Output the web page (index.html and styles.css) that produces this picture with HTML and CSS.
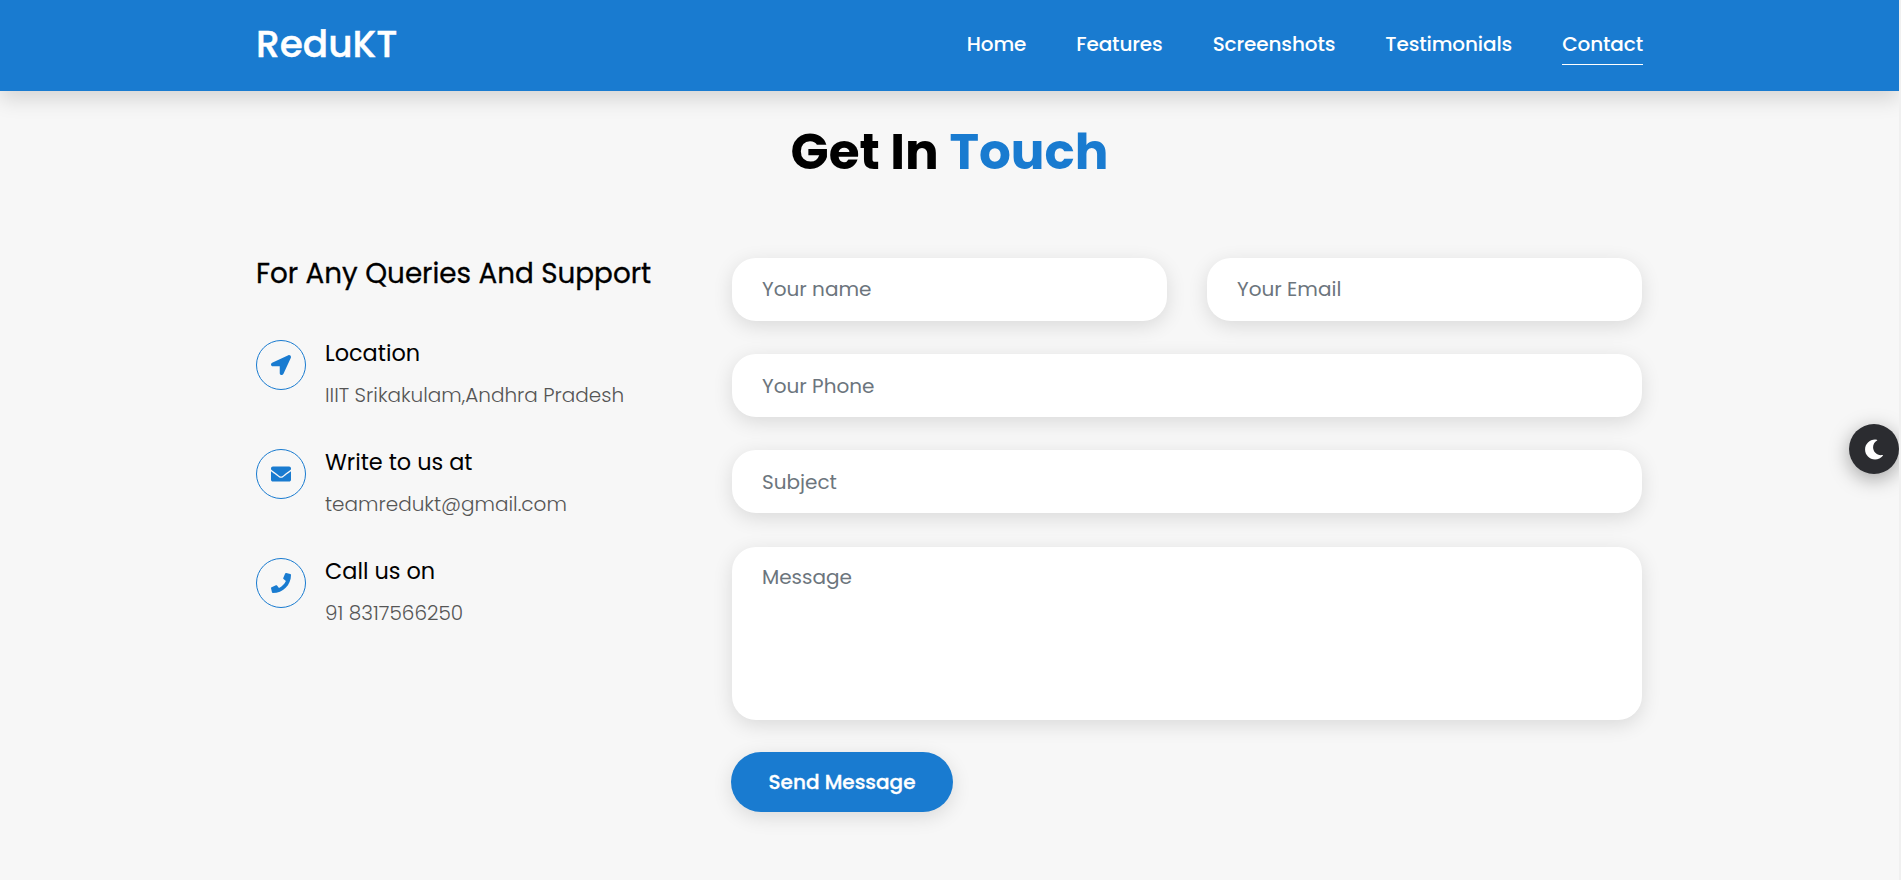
FILE: index.html
```html
<!DOCTYPE html>
<html lang="en">
<head>
<meta charset="utf-8">
<title>ReduKT</title>
<link rel="stylesheet" href="styles.css">
</head>
<body>
<header class="header">
  <div class="container header-row">
    <a class="logo">ReduKT</a>
    <nav class="nav">
      <a class="nav-link">Home</a>
      <a class="nav-link">Features</a>
      <a class="nav-link">Screenshots</a>
      <a class="nav-link">Testimonials</a>
      <a class="nav-link active">Contact</a>
    </nav>
  </div>
</header>
<main class="container">
  <h1 class="title">Get In <span class="accent">Touch</span></h1>
  <div class="columns">
    <section class="info">
      <h2 class="info-title">For Any Queries And Support</h2>
      <div class="item">
        <div class="item-icon"><svg width="20" height="20" viewBox="0 0 512 512"><path d="M444.500 3.500L28.700 195.400c-48 22.400-32 92.800 19.200 92.800h175.900v175.900c0 51.200 70.400 67.200 92.800 19.200l191.900-415.800c16-38.400-25.600-80-64-64z"/></svg></div>
        <div><h3 class="item-name">Location</h3><p class="item-text">IIIT Srikakulam,Andhra Pradesh</p></div>
      </div>
      <div class="item">
        <div class="item-icon"><svg width="20" height="20" viewBox="0 0 512 512"><path d="M502.300 190.800c3.900-3.100 9.700-.2 9.700 4.700V400c0 26.500-21.500 48-48 48H48c-26.500 0-48-21.500-48-48V195.600c0-5 5.700-7.800 9.700-4.700 22.400 17.400 52.100 39.500 154.100 113.600 21.100 15.400 56.700 47.800 92.200 47.600 35.700.3 72-32.800 92.300-47.600 102-74.100 131.600-96.300 154-113.700zM256 320c23.200.4 56.600-29.200 73.400-41.400 132.700-96.300 142.800-104.700 173.400-128.700 5.800-4.500 9.200-11.500 9.200-18.900v-19c0-26.500-21.500-48-48-48H48c-26.500 0-48 21.500-48 48v19c0 7.400 3.400 14.300 9.200 18.900 30.600 23.900 40.700 32.400 173.400 128.700 16.800 12.200 50.200 41.800 73.400 41.400z"/></svg></div>
        <div><h3 class="item-name">Write to us at</h3><p class="item-text">teamredukt@gmail.com</p></div>
      </div>
      <div class="item">
        <div class="item-icon"><svg width="20" height="20" viewBox="0 0 512 512"><path d="M493.400 24.600l-104-24c-11.300-2.600-22.900 3.300-27.500 13.900l-48 112c-4.200 9.800-1.400 21.300 6.900 28l60.600 49.600c-36 76.700-98.900 140.500-177.200 177.200l-49.600-60.600c-6.800-8.300-18.200-11.100-28-6.900l-112 48C3.900 366.500-2 378.100.6 389.400l24 104C27.100 504.200 36.700 512 48 512c256.100 0 464-207.500 464-464 0-11.200-7.700-20.900-18.600-23.400z"/></svg></div>
        <div><h3 class="item-name">Call us on</h3><p class="item-text">91 8317566250</p></div>
      </div>
    </section>
    <form class="form">
      <div class="pair">
        <input class="field" type="text" placeholder="Your name">
        <input class="field" type="text" placeholder="Your Email">
      </div>
      <input class="field" type="text" placeholder="Your Phone">
      <input class="field" type="text" placeholder="Subject">
      <textarea class="field message" placeholder="Message"></textarea>
      <button class="send" type="button">Send Message</button>
    </form>
  </div>
</main>
<div class="toggle"><svg width="20" height="21" viewBox="0 0 512 512"><path d="M283.200 512c79 0 151.100-35.900 198.900-94.800 7.100-8.700-.6-21.500-11.600-19.400-124.200 23.700-238.300-71.600-238.300-197 0-72.200 38.700-138.600 101.500-174.400 9.700-5.500 7.300-20.200-3.800-22.200A258.200 258.200 0 0 0 283.200 0c-141.300 0-256 114.500-256 256 0 141.300 114.500 256 256 256z"/></svg></div>
<div class="edge"></div>
</body>
</html>
```
FILE: styles.css
```css
* { box-sizing: border-box; margin: 0; padding: 0; }
body {
  height: 880px;
  padding-right: 2px;
  overflow: hidden;
  background: #f7f7f7;
  color: #000;
  font-family: Poppins, Inter, sans-serif;
  font-size: 20px;
}
.container { width: 1387px; margin: 0 auto; }
.header {
  position: relative;
  height: 91px;
  background: #197bd0;
  box-shadow: 0 8px 20px rgba(0, 0, 0, .14);
}
.header-row {
  display: flex;
  justify-content: space-between;
  align-items: center;
  height: 88px;
  color: #fff;
}
.logo { font-size: 37.5px; font-weight: 500; -webkit-text-stroke: .4px #fff; }
.nav { display: flex; gap: 50px; }
.nav-link {
  height: 42px;
  line-height: 43px;
  border-bottom: 1px solid transparent;
  font-weight: 500;
  letter-spacing: -.12px;
  white-space: nowrap;
}
.nav-link.active { border-color: #fff; }
.title {
  margin-top: 24px;
  text-align: center;
  font-size: 50px;
  line-height: 73px;
  font-weight: 700;
}
.accent { color: #197bd0; }
.columns { display: flex; justify-content: space-between; margin-top: 70px; }
.info { width: 440px; }
.info-title {
  margin-bottom: 47px;
  font-size: 27.8px;
  line-height: 32px;
  font-weight: 400;
  -webkit-text-stroke: .3px #000;
  white-space: nowrap;
}
.item { display: flex; gap: 19px; height: 109px; padding-top: 3px; }
.item-icon {
  display: flex;
  align-items: center;
  justify-content: center;
  width: 50px;
  height: 50px;
  border: 1px solid #197bd0;
  border-radius: 50%;
}
.item-icon svg { fill: #197bd0; }
.item-name { font-size: 22.4px; line-height: 26px; font-weight: 400; }
.item-text { margin-top: 16px; line-height: 26px; font-weight: 300; color: #555; white-space: nowrap; }
.form { display: flex; flex-direction: column; width: 912px; padding: 0 1px; gap: 33px; }
.pair { display: grid; grid-template-columns: 1fr 1fr; gap: 40px; }
.field {
  display: block;
  width: 100%;
  height: 63px;
  padding: 0 30px;
  border: 0;
  border-radius: 24px;
  outline: 0;
  background: #fff;
  box-shadow: 0 5px 20px rgba(0, 0, 0, .12);
  font: inherit;
}
.pair .field { padding-bottom: 2px; }
.field::placeholder { color: #6c757d; opacity: 1; }
.message { height: 173px; margin-top: 1px; padding-top: 17px; line-height: 26px; resize: none; }
.send {
  width: 222px;
  height: 60px;
  margin: -1px 0 0 -1px;
  border: 0;
  border-radius: 30px;
  background: #197bd0;
  box-shadow: 0 5px 20px rgba(0, 0, 0, .12);
  color: #fff;
  font: inherit;
  font-weight: 500;
  -webkit-text-stroke: .3px #fff;
}
.toggle {
  position: fixed;
  top: 424px;
  right: 2px;
  display: flex;
  align-items: center;
  justify-content: center;
  width: 50px;
  height: 50px;
  border-radius: 50%;
  background: #2b2c30;
  box-shadow: 0 5px 20px rgba(0, 0, 0, .35);
}
.toggle svg { fill: #fff; }
.edge { position: fixed; top: 0; right: 0; width: 2px; height: 100%; background: #f0f0f0; }
```
